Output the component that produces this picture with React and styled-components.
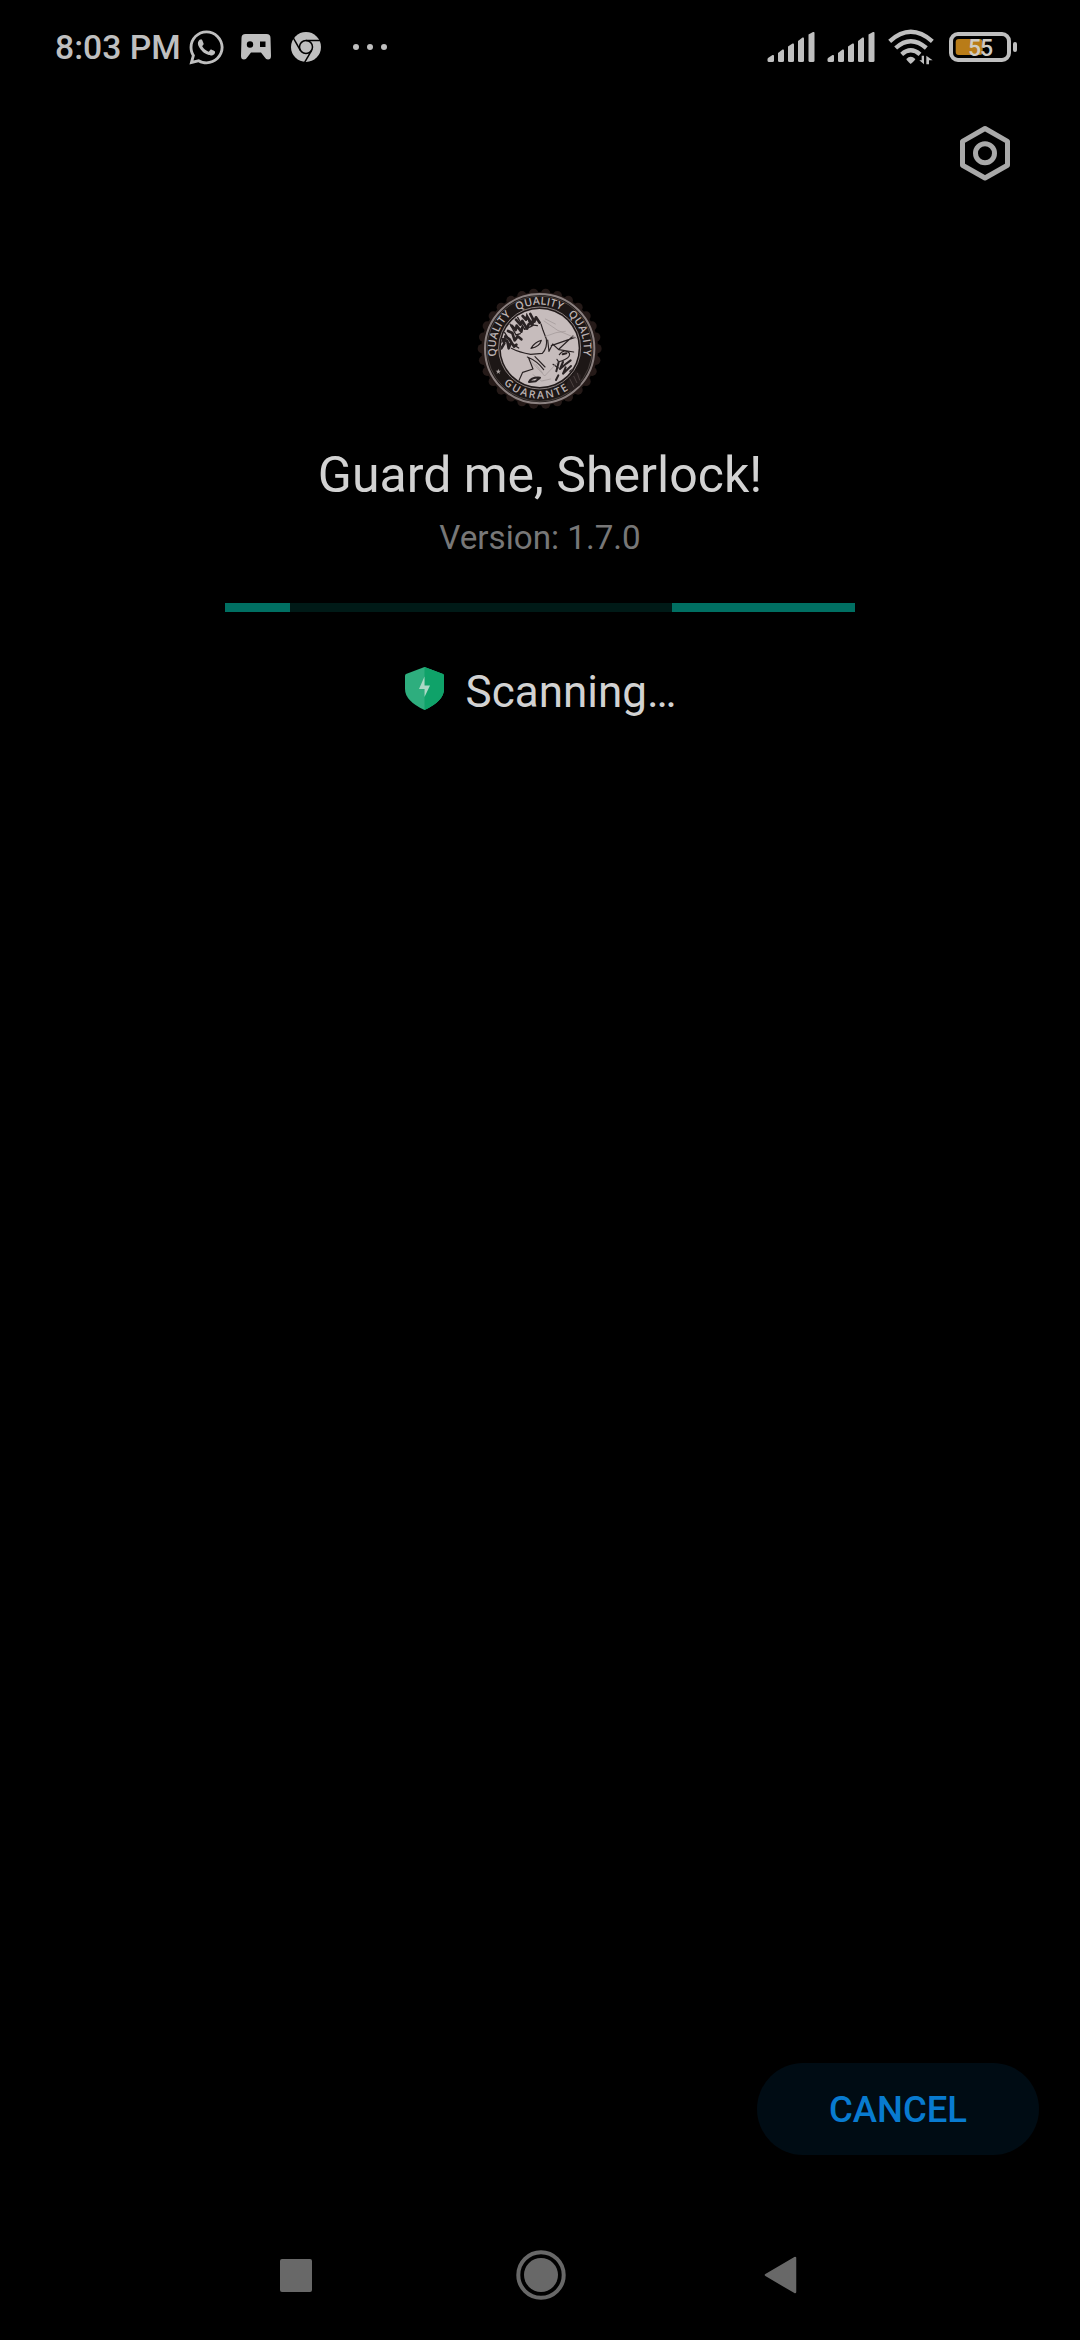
import React from "react";
import styled, { createGlobalStyle } from "styled-components";
import { FaWhatsapp } from "react-icons/fa";

const GlobalStyle = createGlobalStyle`
  * { box-sizing: border-box; }
  html, body { margin: 0; background: #000; }
  body { font-family: Roboto, "Noto Sans", sans-serif; }
  svg { display: block; flex: none; }
`;

const Screen = styled.div`
  width: 1080px;
  height: 2340px;
  display: flex;
  flex-direction: column;
  background: #000;
  overflow: hidden;
`;

const StatusBar = styled.header`
  height: 94px;
  padding: 0 63px 0 55px;
  display: flex;
  align-items: center;
  justify-content: space-between;
  color: #bfbfbf;
`;

const StatusGroup = styled.div`
  display: flex;
  align-items: center;
`;

const StatusItem = styled.span`
  display: flex;
  margin-left: ${(p) => p.$before || 0}px;
`;

const Clock = styled.time`
  width: 131.5px;
  font-size: 33.7px;
  line-height: 40px;
  font-weight: 500;
  white-space: nowrap;
  padding-top: 2px;
`;

const Dots = styled.div`
  display: flex;
  gap: 8px;
`;

const Dot = styled.span`
  width: 6px;
  height: 6px;
  border-radius: 50%;
  background: #bfbfbf;
`;

const Toolbar = styled.div`
  height: 118px;
  padding: 0 68px;
  display: flex;
  align-items: center;
  justify-content: flex-end;
`;

const SettingsButton = styled.button`
  padding: 0;
  border: 0;
  background: none;
  color: #a9a9a9;
`;

const Main = styled.main`
  flex: 1;
  display: flex;
  flex-direction: column;
  align-items: center;
  padding-top: 68px;
`;

const AppName = styled.h1`
  margin: 25px 0 0;
  font-size: 50px;
  line-height: 60px;
  font-weight: 400;
  color: #d2d2d2;
  white-space: nowrap;
`;

const Version = styled.p`
  margin: 13px 0 0;
  font-size: 33.2px;
  line-height: 40px;
  color: #777;
  white-space: nowrap;
`;

const Progress = styled.div`
  width: 630px;
  height: 9px;
  margin-top: 45px;
  display: flex;
  justify-content: space-between;
  background: #001a17;
`;

const ProgressSegment = styled.span`
  width: ${(p) => p.$width}px;
  background: #006f62;
`;

const ScanRow = styled.div`
  margin-top: 55px;
  padding-left: 1px;
  display: flex;
  align-items: flex-start;
  gap: 22px;
`;

const ScanText = styled.span`
  font-size: 44px;
  line-height: 50px;
  color: #d2d2d2;
`;

const Actions = styled.footer`
  display: flex;
  justify-content: flex-end;
  padding: 0 41px 55px;
`;

const CancelButton = styled.button`
  width: 282px;
  height: 92px;
  padding: 2px 0 0;
  border: 0;
  border-radius: 46px;
  background: #000c14;
  color: #087bd0;
  font: 500 36.5px/44px Roboto, sans-serif;
`;

const NavBar = styled.nav`
  height: 130px;
  padding: 0 283px 0 280px;
  display: flex;
  align-items: center;
  justify-content: space-between;
`;

const NavItem = styled.span`
  display: flex;
  padding-left: ${(p) => p.$inset || 0}px;
`;

const Signal = () => (
  <svg width="48" height="32" viewBox="0 0 48 32" fill="#bfbfbf">
    <path d="M1 27 L5.5 24 Q7 23.5 7 25 V29.5 Q7 31 5.5 31 H2 Q.5 31 .5 29.5 V28Z" />
    <path d="M11 22 L15.500 18.500 Q17 18 17 19.500 V29.500 Q17 31 15.500 31 H12.500 Q11 31 11 29.500Z" />
    <path d="M21 15.500 L25.500 12.500 Q27 12 27 13.500 V29.500 Q27 31 25.500 31 H22.500 Q21 31 21 29.500Z" />
    <path d="M31 10 L35.500 6.500 Q37 6 37 7.500 V29.500 Q37 31 35.500 31 H32.500 Q31 31 31 29.500Z" />
    <path d="M41.500 3.500 L46 1 Q47.500 .5 47.500 2 V29.500 Q47.500 31 46 31 H43 Q41.500 31 41.500 29.500Z" />
  </svg>
);

const Gamepad = () => (
  <svg width="30" height="26" viewBox="0 0 30 26">
    <path fill="#bfbfbf" fillRule="evenodd" d="M4.500 0H25.500Q29.500 0 29.500 4L30 22Q30 25.500 27 25.500Q25 25.500 23.500 23L20 18.500H10L6.500 23Q5 25.500 3 25.500Q0 25.500 0 22L.5 4Q.5 0 4.500 0ZM9 7.300A3.200 3.200 0 1 0 9 13.700A3.200 3.200 0 1 0 9 7.300ZM19 7.500V13H24.500V7.500Z" />
  </svg>
);

const Chrome = () => (
  <svg width="30" height="30" viewBox="-45 -45 90 90">
    <circle r="45" fill="#bfbfbf" />
    <g fill="none" stroke="#000" strokeWidth="4.500">
      <circle r="19.500" />
      <path d="M0-19.500H46" />
      <path d="M0-19.500H46" transform="rotate(120)" />
      <path d="M0-19.500H46" transform="rotate(240)" />
    </g>
  </svg>
);

const Wifi = () => (
  <svg width="46" height="36" viewBox="0 0 138 108">
    <g fill="none" stroke="#bfbfbf" strokeWidth="13">
      <path d="M5 37Q68-20 133 37" />
      <path d="M23 57Q68 16 115 57" />
      <path d="M41 76Q68 52 96 76" />
    </g>
    <path d="M55 90Q68 77 82 90Q82 93 68 105Q55 93 55 90Z" fill="#bfbfbf" />
    <path d="M108 80V106L94 94H101V80ZM115 106V80L134 94H123V106Z" fill="#bfbfbf" />
  </svg>
);

const Battery = () => (
  <svg width="68" height="30" viewBox="0 0 68 30">
    <rect x="2" y="2" width="58" height="26" rx="7" fill="none" stroke="#bfbfbf" strokeWidth="4" />
    <rect x="6.700" y="7" width="27" height="16" rx="3" fill="#b97c18" />
    <rect x="64" y="10" width="4" height="10" rx="2" fill="#bfbfbf" />
    <text x="31.500" y="23.700" textAnchor="middle" fontFamily="Roboto, sans-serif" fontSize="23" textLength="25" fontWeight="500" fill="#d0ccc4">55</text>
  </svg>
);

const Settings = () => (
  <svg width="54" height="60" viewBox="0 0 54 60" fill="none" stroke="currentColor" strokeWidth="5" strokeLinejoin="round">
    <path d="M27 5.500 L49.500 18.300 V42.300 L27 55 L4.500 42.300 V18.300Z" />
    <circle cx="27" cy="30.300" r="9.500" />
  </svg>
);

const scallops = Array.from({ length: 30 }, (_, i) => {
  const a = (i / 30) * Math.PI * 2;
  return { x: 209 + Math.cos(a) * 172, y: 206 + Math.sin(a) * 167 };
});

const Seal = () => (
  <svg width="140" height="140" viewBox="0 0 420 420">
    <defs>
      <path id="sealTop" d="M79 229A132 132 0 1 1 339 229" />
      <path id="sealBottom" d="M101 310A150 150 0 0 0 339 281" />
      <clipPath id="portrait"><circle cx="209" cy="204" r="117" /></clipPath>
    </defs>
    <g fill="#251a18">
      <ellipse cx="209" cy="206" rx="175" ry="170" />
      {scallops.map((s, i) => <circle key={i} cx={s.x} cy={s.y} r="14" />)}
    </g>
    <circle cx="209" cy="206" r="164" fill="#1d1716" stroke="#8b8180" strokeWidth="6" />
    <circle cx="209" cy="206" r="158" fill="none" stroke="#5d5452" strokeWidth="2" />
    <circle cx="209" cy="204" r="123" fill="#211a1a" stroke="#8b8180" strokeWidth="3" />
    <circle cx="209" cy="204" r="117" fill="#c6bcbc" />
    <g clipPath="url(#portrait)" stroke="#292223" fill="none" strokeLinecap="round" strokeLinejoin="round">
      <path strokeWidth="8" d="M94 205L103 190L98 178L112 184L116 205L122 190M106 169L119 178L132 200L139 194M114 153L127 159L134 181L143 169L154 178M125 137L137 150L140 137L154 155L157 142M138 119L151 134L157 123L171 146L176 133M158 108L168 119L171 109L187 135L189 119M181 102L193 125L198 112L209 128" />
      <path strokeWidth="4" d="M91 190L104 173L113 188M104 158L125 190L146 204M120 132L138 165L151 161M143 112L164 148L184 139M170 102L180 134L202 137" />
      <path strokeWidth="3.500" d="M124 205Q148 218 182 223L217 220Q233 203 229 177L219 151L213 132M183 205Q194 186 214 181Q209 200 183 205ZM145 306L158 277L189 267L176 234M172 231Q202 243 221 269M195 230L225 261M249 253L265 264" />
      <path strokeWidth="3.500" d="M233 180L237 214L248 192L266 209L311 216M244 197L315 172M267 207L309 168M268 224Q281 205 298 219Q302 230 286 238Q264 251 261 238" />
      <path strokeWidth="6" d="M278 223L289 220M266 247L259 274M279 246L270 267L290 250L302 241M265 286L258 300M287 262L279 281L303 258M301 274L311 267" />
      <path stroke="#9e9596" strokeWidth="2" d="M222 123L263 151L326 178M226 117L256 132M224 170L258 158L286 154M184 245L224 288L260 250M189 284L215 303L242 297M198 253L218 279" />
      <path strokeWidth="6" d="M177 306Q184 291 210 293L197 304Z" />
    </g>
    <path d="M293 302L318 272L334 286L331 315L305 333L288 321Z" fill="#261e1e" />
    <g fontFamily='"Open Sans", sans-serif' fontSize="32" fontWeight="600" fill="#bbb2b2">
      <text wordSpacing="14"><textPath href="#sealTop" textLength="458" lengthAdjust="spacing">QUALITY QUALITY QUALITY</textPath></text>
      <text><textPath href="#sealBottom" textLength="213" lengthAdjust="spacing">GUARANTE</textPath></text>
    </g>
    <path d="M299 296L312 322M311 288L321 309M322 279L329 301" fill="none" stroke="#493f3e" strokeWidth="3" />
    <path d="M85 266L87 272L93 272L88 276L90 282L85 278L80 282L82 276L77 272L83 272Z" fill="#aaa2a1" />
  </svg>
);

const Shield = () => (
  <svg width="39" height="43" viewBox="0 0 39 43">
    <path d="M19.500 0L38 7Q39 7.500 39 9V22Q39 34 19.500 43Q0 34 0 22V9Q0 7.500 1 7Z" fill="#2eae7e" />
    <path d="M19.500 0L38 7Q39 7.500 39 9V22Q39 34 19.500 43Z" fill="#0fa269" />
    <path d="M19.500 9.500L14 22H19.500V30L25 18.500H19.500Z" fill="#abd8c6" />
  </svg>
);

const Recents = () => (
  <svg width="32" height="33" viewBox="0 0 32 33"><rect width="32" height="33" rx="2" fill="#686868" /></svg>
);
const Home = () => (
  <svg width="50" height="50" viewBox="0 0 50 50"><circle cx="25" cy="25" r="22.700" fill="none" stroke="#686868" strokeWidth="4" /><circle cx="25" cy="25" r="17" fill="#686868" /></svg>
);
const Back = () => (
  <svg width="33" height="38" viewBox="0 0 33 38"><path d="M2 19L31 2V36Z" fill="#686868" stroke="#686868" strokeWidth="2.500" strokeLinejoin="round" /></svg>
);

export default function App() {
  return (
    <Screen>
      <GlobalStyle />
      <StatusBar>
        <StatusGroup>
          <Clock>8:03 PM</Clock>
          <StatusItem><FaWhatsapp size={39} /></StatusItem>
          <StatusItem $before={15.5}><Gamepad /></StatusItem>
          <StatusItem $before={20}><Chrome /></StatusItem>
          <StatusItem $before={32}><Dots><Dot /><Dot /><Dot /></Dots></StatusItem>
        </StatusGroup>
        <StatusGroup>
          <StatusItem><Signal /></StatusItem>
          <StatusItem $before={12}><Signal /></StatusItem>
          <StatusItem $before={13}><Wifi /></StatusItem>
          <StatusItem $before={15}><Battery /></StatusItem>
        </StatusGroup>
      </StatusBar>
      <Toolbar>
        <SettingsButton aria-label="Settings"><Settings /></SettingsButton>
      </Toolbar>
      <Main>
        <Seal />
        <AppName>Guard me, Sherlock!</AppName>
        <Version>Version: 1.7.0</Version>
        <Progress><ProgressSegment $width={65} /><ProgressSegment $width={183} /></Progress>
        <ScanRow><Shield /><ScanText>Scanning…</ScanText></ScanRow>
      </Main>
      <Actions><CancelButton>CANCEL</CancelButton></Actions>
      <NavBar>
        <NavItem><Recents /></NavItem>
        <NavItem $inset={5}><Home /></NavItem>
        <NavItem><Back /></NavItem>
      </NavBar>
    </Screen>
  );
}
